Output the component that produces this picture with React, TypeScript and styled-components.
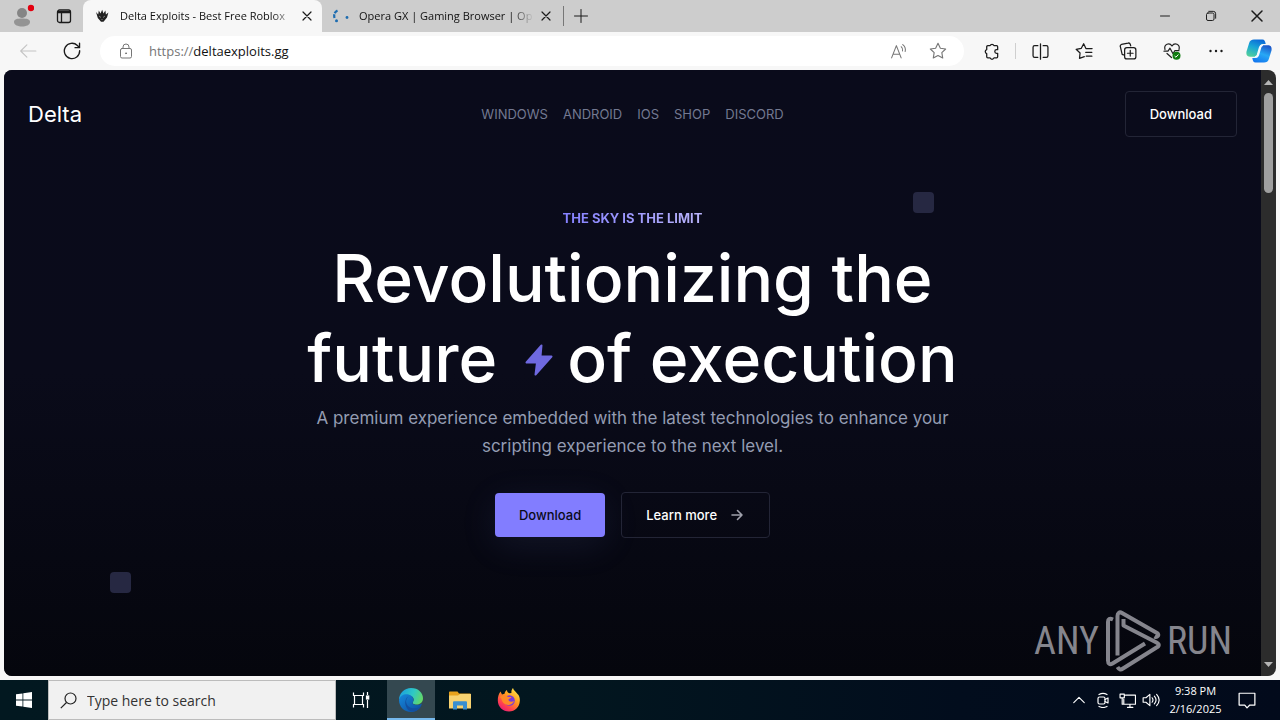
import React from "react";
import styled, { createGlobalStyle } from "styled-components";

const SYSTEM = '"Open Sans", "Noto Sans", sans-serif';
const BRAND = 'Inter, "Liberation Sans", sans-serif';

const GlobalStyle = createGlobalStyle`
  *, *::before, *::after { box-sizing: border-box; }
  body { margin: 0; background: #f7f7f7; font-family: ${SYSTEM}; }
  button, input { font: inherit; color: inherit; }
  button { margin: 0; padding: 0; border: 0; background: none; cursor: pointer; }
  a { color: inherit; text-decoration: none; }
  h1, p { margin: 0; }
  svg { display: block; flex: none; }
`;

const Desktop = styled.div`
  display: flex;
  flex-direction: column;
  min-height: 100vh;
`;

/* ---------- browser frame ---------- */

const TabStrip = styled.header`
  display: flex;
  height: 32px;
  background: #cdcdcd;
`;

const IconButton = styled.button<{ $width?: number; $color?: string }>`
  display: flex;
  flex: none;
  align-items: center;
  justify-content: center;
  width: ${(p) => p.$width ?? 44}px;
  color: ${(p) => p.$color ?? "#1b1b1b"};
`;

const Tab = styled.div<{ $active?: boolean }>`
  display: flex;
  align-items: center;
  width: 239px;
  padding: 0 5px 0 11px;
  background: ${(p) => (p.$active ? "#f7f7f7" : "transparent")};
  border-radius: 8px 8px 0 0;
`;

const TabTitle = styled.span`
  flex: 1;
  min-width: 0;
  margin: 0 4px 0 10px;
  white-space: nowrap;
  font-size: 11px;
  line-height: 16px;
  color: #111;
  mask-image: linear-gradient(90deg, #000 88%, transparent 101%);
`;

const Divider = styled.span<{ $height: number }>`
  flex: none;
  align-self: center;
  width: 1px;
  height: ${(p) => p.$height}px;
  margin: 0 2px;
  background: ${(p) => (p.$height > 18 ? "#777" : "#cfcfcf")};
`;

const WindowControls = styled.div`
  display: flex;
  margin-left: auto;
`;

const Toolbar = styled.div`
  display: flex;
  align-items: stretch;
  height: 38px;
  padding: 4px 0 4px 6px;
  background: #f7f7f7;
`;

const AddressBar = styled.label`
  display: flex;
  flex: 1;
  align-items: center;
  margin: 0 5px 0 6px;
  padding: 0 6px 0 18px;
  border-radius: 15px;
  background: #fff;
  font-size: 13px;
  color: #767676;
`;

const Scheme = styled.span`
  margin-left: 15px;
`;

const AddressInput = styled.input`
  flex: 1;
  min-width: 0;
  padding: 0;
  border: 0;
  outline: 0;
  background: transparent;
  color: #111;
`;

const Viewport = styled.div`
  display: flex;
  flex: 1;
  margin: 0 4px 4px;
  overflow: hidden;
  border-radius: 8px;
  background: #2c2c2c;
`;

const ScrollTrack = styled.div`
  display: flex;
  flex: none;
  flex-direction: column;
  align-items: center;
  width: 15px;
  padding: 10px 0 9px;
`;

const ScrollThumb = styled.div`
  width: 9px;
  height: 100px;
  margin: 8px 0 auto;
  border-radius: 5px;
  background: #9f9f9f;
`;

/* ---------- web page ---------- */

const Page = styled.div`
  position: relative;
  flex: 1;
  font-family: ${BRAND};
  background: linear-gradient(#0a0b1b 0%, #0a0b1a 50%, #05060d 100%);
  color: #fff;
`;

const NavBar = styled.nav`
  display: grid;
  grid-template-columns: 1fr auto 1fr;
  align-items: center;
  padding: 21px 24px;
`;

const Brand = styled.a`
  font-size: 22px;
  line-height: 28px;
`;

const NavLinks = styled.div`
  display: flex;
  gap: 15px;
  font-size: 13px;
  line-height: 20px;
  color: #737991;
`;

const ActionButton = styled.button<{ $primary?: boolean }>`
  display: inline-flex;
  align-items: center;
  justify-self: end;
  gap: 12px;
  height: ${(p) => (p.$primary ? 44 : 46)}px;
  padding: 0 24px;
  border: ${(p) => (p.$primary ? "0" : "1px solid #232536")};
  border-radius: 4px;
  font-size: 13px;
  font-weight: 500;
  line-height: 20px;
  color: ${(p) => (p.$primary ? "#0a0b1a" : "#fff")};
  background: ${(p) => (p.$primary ? "#827dff" : "transparent")};
  box-shadow: ${(p) => (p.$primary ? "0 8px 36px rgba(110, 125, 200, 0.12)" : "none")};
`;

const Hero = styled.main`
  display: flex;
  flex-direction: column;
  align-items: center;
  padding: 50px 24px 0;
  text-align: center;
`;

const Eyebrow = styled.p`
  margin-bottom: 10px;
  font-size: 13px;
  font-weight: 700;
  line-height: 20px;
  color: transparent;
  background: linear-gradient(90deg, #8480ff, #b9b4fb);
  background-clip: text;
`;

const Headline = styled.h1`
  font-size: 66px;
  font-weight: 500;
  line-height: 80px;
`;

const BoltIcon = styled.svg`
  display: inline-block;
  margin: 0 14px 0 28px;
  vertical-align: 6px;
`;

const Lead = styled.p`
  max-width: 660px;
  margin-top: 6px;
  font-size: 17px;
  font-weight: 400;
  line-height: 28px;
  color: #949cb2;
`;

const Actions = styled.div`
  display: flex;
  align-items: center;
  gap: 16px;
  margin-top: 32px;
`;

const FloatingSquare = styled.span<{ $spot: "upper" | "lower" }>`
  position: absolute;
  ${(p) =>
    p.$spot === "upper"
      ? "top: 122px; left: calc(50% + 280px);"
      : "bottom: 83px; left: 106px;"}
  width: 21px;
  height: 21px;
  border-radius: 4px;
  background: #262842;
`;

const Watermark = styled.div`
  position: absolute;
  right: 29px;
  bottom: 4px;
  display: flex;
  align-items: center;
  gap: 6px;
  font-family: "Liberation Sans Narrow", "Roboto Condensed", "Liberation Sans", sans-serif;
  font-size: 38px;
  line-height: 62px;
  color: #85858d;
`;

/* ---------- taskbar ---------- */

const Taskbar = styled.footer`
  display: flex;
  height: 40px;
  background: linear-gradient(90deg, #021820 0%, #02161f 45%, #020d1d 75%, #020a1b 100%);
  color: #fff;
`;

const SearchBox = styled.label`
  display: flex;
  align-items: center;
  width: 288px;
  padding: 0 11px;
  gap: 10px;
  border: 1px solid #bcbcbc;
  background: #f1f1f1;
  color: #222;
  font-size: 14px;
`;

const SearchInput = styled.input`
  flex: 1;
  min-width: 0;
  padding: 0;
  border: 0;
  outline: 0;
  background: transparent;
  &::placeholder { color: #333; opacity: 1; }
`;

const TaskButtons = styled.div`
  display: flex;
  gap: 1px;
`;

const TaskButton = styled.button<{ $active?: boolean; $width?: number }>`
  display: flex;
  flex: none;
  align-items: center;
  justify-content: center;
  width: ${(p) => p.$width ?? 48}px;
  background: ${(p) => (p.$active ? "#344850" : "transparent")};
  box-shadow: ${(p) => (p.$active ? "inset 0 -2px #76b9ed" : "none")};
`;

const Tray = styled.div`
  display: flex;
  align-items: stretch;
  margin-left: auto;
`;

const Clock = styled.button`
  width: 65px;
  text-align: center;
  font-size: 11px;
  line-height: 18px;
`;

/* ---------- icons ---------- */

type LineProps = {
  size?: number;
  width?: number;
  children: React.ReactNode;
};

const Line = ({ size = 16, width = 1, children }: LineProps) => (
  <svg
    width={size}
    height={size}
    viewBox="0 0 16 16"
    fill="none"
    stroke="currentColor"
    strokeWidth={width}
    strokeLinecap="round"
    strokeLinejoin="round"
    aria-hidden="true"
  >
    {children}
  </svg>
);

const CloseIcon = ({ size = 16 }: { size?: number }) => (
  <Line size={size} width={1.2}>
    <path d="M4 4l8 8M12 4l-8 8" />
  </Line>
);

const ProfileIcon = () => (
  <svg width="24" height="24" viewBox="0 0 24 24" aria-hidden="true">
    <circle cx="12" cy="9" r="5" fill="#858585" />
    <path d="M4 18c0-3 3-3.600 8-3.600s8 .6 8 3.600c0 3-4 4.500-8 4.500S4 21 4 18z" fill="#949494" />
    <circle cx="21" cy="4" r="3.200" fill="#e3000f" />
  </svg>
);

const WorkspaceIcon = () => (
  <Line width={1.3}>
    <rect x="1.500" y="2" width="13" height="12.500" rx="2" />
    <path d="M2 3.600h12M2 4.600h12M5.500 5v9" />
  </Line>
);

const DeltaFavicon = () => (
  <svg width="16" height="14" viewBox="-1 0 16 14" aria-hidden="true">
    <path d="M1 3l2.200 2.500L3.800 1.500 5.500 4.500 7.200.8l1.200 3.700L10.400 1.500l.5 4L13.400 3.500 12 8.500 8.500 12.800H6L2.800 9z" fill="#222" />
    <path d="M4 7l2 1.500M10 7L8 8.500M6.500 10.500h1" stroke="#999" strokeWidth=".8" />
  </svg>
);

const LoadingIcon = () => (
  <svg width="16" height="16" viewBox="1 0 16 16" aria-hidden="true">
    <path d="M5.500 2.500C2.500 4 1.700 6.500 2.500 10" fill="none" stroke="#1d6cb0" strokeWidth="2.200" strokeDasharray="4 1.200" />
    <circle cx="4.500" cy="12.800" r="1.500" fill="#1d6cb0" />
    <circle cx="15" cy="9.500" r="1.400" fill="#1d6cb0" />
  </svg>
);

const RestoreIcon = () => (
  <Line size={12} width={1.300}>
    <rect x="2" y="4" width="10" height="10" rx="2" />
    <path d="M5 1.800h6a3.200 3.200 0 0 1 3.200 3.200v6" />
  </Line>
);

const BackIcon = () => (
  <Line size={18} width={1}>
    <path d="M15 8H1.500M7 2.500L1.500 8 7 13.500" />
  </Line>
);

const ReloadIcon = () => (
  <Line size={18} width={1.200}>
    <path d="M14.800 7.800A6.800 6.800 0 1 1 12.800 3.100L14.600 5M14.700 1v4h-4" />
  </Line>
);

const LockIcon = () => (
  <Line size={16} width={1}>
    <rect x="2.500" y="5.500" width="11" height="9.500" rx="1.500" />
    <path d="M5 5.500V4a3 3 0 0 1 6 0v1.500" />
    <circle cx="8" cy="10.300" r=".5" fill="currentColor" />
  </Line>
);

const ReadAloudIcon = () => (
  <Line size={17} width={1}>
    <path d="M1.500 14L6 2.500 10.500 14M3 10.500h6M10.500 3.500a4 4 0 0 1 1.300 4M12 1.500a6.500 6.500 0 0 1 2.300 6.500" />
  </Line>
);

const StarIcon = () => (
  <Line size={18} width={1}>
    <path d="M8 1.200l2.100 4.300 4.700.7-3.400 3.300.8 4.700L8 12l-4.200 2.200.8-4.700L1.200 6.200l4.700-.7z" />
  </Line>
);

/* Jigsaw piece with its tabs on the top, left and bottom and a notch on the right. */
const PuzzleIcon = () => (
  <Line size={17} width={1.200}>
    <path d="M4.500 2.500h2.200a1.900 1.900 0 0 1 3.600 0h2.500a1 1 0 0 1 1 1v2.800h-1a1.700 1.700 0 0 0 0 3.400h1v3.300a1 1 0 0 1-1 1h-2.500a1.900 1.900 0 0 1-3.600 0H4.500a1 1 0 0 1-1-1V10a2 2 0 0 1 0-3.800V3.500a1 1 0 0 1 1-1z" />
  </Line>
);

const SplitIcon = () => (
  <Line size={17} width={1.200}>
    <path d="M5.500 2.500h-3a1.500 1.500 0 0 0-1.500 1.500v8a1.500 1.500 0 0 0 1.500 1.500h3M10.500 2.500h3A1.500 1.500 0 0 1 15 4v8a1.500 1.500 0 0 1-1.500 1.500h-3M8 .8v14.400" />
  </Line>
);

const FavoritesIcon = () => (
  <Line size={18} width={1.100}>
    <path d="M8.300 13L4 14.500l.5-4.700L1 6.500l4.500-.8L7.700 1.500l2 4.300h5.500M9.500 9.200h5.500M10 12.600h5" />
  </Line>
);

const CollectionsIcon = () => (
  <Line size={18} width={1.100}>
    <rect x="5" y="5" width="10" height="10" rx="2" />
    <path d="M10 7.500v5M7.500 10h5M4 11.500L2.800 11 1.200 4.200a1.600 1.600 0 0 1 1-2L8 1a1.600 1.600 0 0 1 2 1l.4 1.500" />
  </Line>
);

const EssentialsIcon = () => (
  <svg width="18" height="18" viewBox="0 0 18 18" aria-hidden="true">
    <path d="M2 7.500C.5 2 6.500.2 9 4c2.500-3.800 8.500-2 7 3.500M1 9.200h4l2-3 3 5.500 1.800-3H16M4 11.500l4.500 4" fill="none" stroke="#222" strokeWidth="1.200" strokeLinejoin="round" strokeLinecap="round" />
    <circle cx="13.500" cy="13.800" r="4" fill="#107c10" />
    <path d="M11.600 14l1.300 1.200 2.500-2.700" fill="none" stroke="#fff" />
  </svg>
);

const CopilotIcon = () => (
  <svg width="26" height="24" viewBox="0 0 26 24" aria-hidden="true">
    <defs>
      <linearGradient id="copilotLeft" x1="0.600" y1="0" x2="0.200" y2="1">
        <stop offset="0" stopColor="#0b6bd8" />
        <stop offset=".45" stopColor="#18a6d6" />
        <stop offset="1" stopColor="#53d09a" />
      </linearGradient>
      <linearGradient id="copilotRight" x1="0.700" y1="0" x2="0.300" y2="1">
        <stop offset="0" stopColor="#1b55c8" />
        <stop offset=".5" stopColor="#28a8f5" />
        <stop offset="1" stopColor="#1478ef" />
      </linearGradient>
    </defs>
    <path d="M8 .5h8.500c2 0 2.600 1.500 3.200 4.500H17c-2 0-2.800 1-3.300 3L11.500 15.500c-.5 1.600-1.500 2.200-3 2.200H4C1 17.700 0 15.500.5 12.500l2.500-8C3.800 1.500 5.500.5 8 .5z" fill="url(#copilotLeft)" />
    <path d="M18 23.500H9.500c-2 0-2.600-1.500-3.200-4.500H9c2 0 2.800-1 3.300-3L14.500 8.500c.5-1.600 1.500-2.200 3-2.200H22c3 0 4 2.200 3.500 5.200l-2.500 8C22.200 22.500 20.500 23.500 18 23.500z" fill="url(#copilotRight)" />
    <path d="M13.700 8.500c.4-1.400 1-2.300 2.300-2.300h.8c-1.200.3-1.900 1.100-2.300 2.300L12.300 16c-.4 1.300-1 2-2.300 2h-.8c1.200-.3 1.900-1 2.300-2z" fill="#f4faff" stroke="#f4faff" strokeWidth="1.600" />
  </svg>
);

const AnyRunMark = () => (
  <svg width="56" height="62" viewBox="0 0 56 62" fill="none" stroke="#85858d" strokeWidth="4" strokeLinejoin="round" aria-hidden="true">
    <path d="M8 9.500C4.500 8 3 9 3 12v38.500c0 3.500 2 4.500 4.500 3L40 33.500" />
    <path d="M12.500 45.500V6c0-3 2-4.500 4.500-3L52 23c3 2 0 5-2.500 3.500" />
    <path d="M18.500 9v6.500l33 17c3 1.500 3 3.500 0 5L18 58.500c-2.500 1.600-4 1-5.500-1.500" />
  </svg>
);

const StartIcon = () => (
  <svg width="16" height="16" viewBox="0 0 16 16" fill="#fff" aria-hidden="true">
    <path d="M0 2.300L6.500 1.400V7.600H0zM7.300 1.300L16 0v7.600H7.300zM0 8.400h6.500v6.200L0 13.700zM7.300 8.400H16V16l-8.700-1.300z" />
  </svg>
);

const TaskViewIcon = () => (
  <svg width="18" height="18" viewBox="0 0 18 18" fill="none" stroke="#fff" strokeWidth="1.200" aria-hidden="true">
    <path d="M1.500 1.500v3h10v-3M1.500 16.500v-3h10v3M2.500 4.500v9M10.500 4.500v9M15.500 1v3M15.500 9v8" />
    <rect x="14.500" y="5" width="2.200" height="3" fill="#fff" />
  </svg>
);

const EdgeIcon = () => (
  <svg width="24" height="24" viewBox="0 0 24 24" aria-hidden="true">
    <defs>
      <linearGradient id="edgeTop" x1="0" y1="0.300" x2="1" y2="0.600">
        <stop offset="0" stopColor="#1a9fe0" />
        <stop offset=".55" stopColor="#2fc9c4" />
        <stop offset="1" stopColor="#65d865" />
      </linearGradient>
      <linearGradient id="edgeBase" x1="0" y1="0" x2="1" y2="1">
        <stop offset="0" stopColor="#1689dc" />
        <stop offset="1" stopColor="#0d4a9c" />
      </linearGradient>
    </defs>
    <path d="M0 12C0 5 5.500 0 12 0c7.500 0 12 5 12 10.200 0 4-3 6.300-6.500 6.300-3 0-4.500-1.200-3.500-2.500 1.700-2.300.6-6-3.500-6C6 8 1 9.500 0 12z" fill="url(#edgeTop)" />
    <path d="M0 12c1-4.500 5.500-6.500 9.500-5.500 3 .8 5 3 5 5.500 0 1-.4 1.700-.8 2.300-.8 1.300.8 2.500 3.600 2.700 2 .1 3.700-.3 5-1.200.5-.3.700 0 .4.600C20.800 21 17 24 12 24 5 24 0 18.500 0 12z" fill="url(#edgeBase)" />
    <path d="M9.500 8.500c-2.500 2-3.600 6-.5 9.500 3 3 8 3 12 .7.500-.3.700-.2.300.5-1.500 2.300-3.800 3.700-6.800 4.300C8.500 24 5 17 6.700 12c.5-1.600 1.500-2.900 2.800-3.500z" fill="#134f9f" />
  </svg>
);

const FolderIcon = () => (
  <svg width="22" height="19" viewBox="0 0 22 19" aria-hidden="true">
    <path d="M0 1.500C0 .7.500.5 1 .5h7.500L10 2.500h11.500V17H0z" fill="#e8a21c" />
    <path d="M0 4.500h9L11 3h11v14.500H0z" fill="#f8d270" />
    <path d="M4 18.500v-7c0-.8.500-1.300 1.300-1.300h11.400c.8 0 1.300.5 1.300 1.300v7h-4v-4H8v4z" fill="#3a8fd0" />
  </svg>
);

const FirefoxIcon = () => (
  <svg width="24" height="24" viewBox="0 0 24 24" aria-hidden="true">
    <defs>
      <linearGradient id="foxBody" x1="0.850" y1="0.050" x2="0.200" y2="1">
        <stop offset="0" stopColor="#ffe54a" />
        <stop offset=".4" stopColor="#ff9a1f" />
        <stop offset=".75" stopColor="#ff3f50" />
        <stop offset="1" stopColor="#e3197a" />
      </linearGradient>
    </defs>
    <path d="M3.500 3.500l1.500 3 2.500-.8C8 3.500 9 2.500 10 2c0 1.500.5 2.600 2.500 3.300L14.500 5c-.5-2 .5-4 1.500-5 .5 2.500 3 3.800 4.500 6l1 1c1.200 2 1.500 4 1.300 6C22.500 19 18 23.500 12 23.500S.8 19 .8 12.500C.8 9 1.500 6 3.500 3.500z" fill="url(#foxBody)" />
    <circle cx="12.500" cy="12.500" r="5.300" fill="#7a3bd8" />
    <path d="M3 9c3-2.500 6-2 8 0h3.500c-.5 1.600-3 1.700-3 2.700 0 1.800 3 2.800 5.500 1.200-1.300 4-7 5.600-10.500 2.100C4.500 13 5 10.500 3 9z" fill="#ff8a27" />
  </svg>
);

const MeetNowIcon = () => (
  <Line size={16} width={1.200}>
    <rect x="3" y="5" width="7" height="7" rx="1.500" />
    <path d="M10 7.500l3-1.500v5l-3-1.500M4 2.500Q8 .2 12 2.500M4 14.500Q8 16.500 12 14.500" />
  </Line>
);

const NetworkIcon = () => (
  <Line size={17} width={1.100}>
    <path d="M6 3h9.500v8.500H4.500V7M8 14.500h5M10.300 11.500v3M1 2h4v3.500H1zM3 5.500v6h1.500" />
  </Line>
);

const VolumeIcon = () => (
  <Line size={18} width={1}>
    <path d="M1 6h2.500L7 3v10l-3.500-3H1zM9 6q1.500 2 0 4M11 4.500q3 3.500 0 7M13 3q4.500 5 0 10" />
  </Line>
);

const ActionCenterIcon = () => (
  <Line size={18} width={1.100}>
    <path d="M1 2h14v10.500h-4.500L8 15l-2-2.500H1z" />
  </Line>
);

const links = ["Windows", "Android", "iOS", "Shop", "Discord"];

export default function App() {
  return (
    <Desktop>
      <GlobalStyle />
      <TabStrip>
        <IconButton aria-label="Profile"><ProfileIcon /></IconButton>
        <IconButton $width={39} aria-label="Workspaces"><WorkspaceIcon /></IconButton>
        <Tab $active>
          <DeltaFavicon />
          <TabTitle>Delta Exploits - Best Free Roblox</TabTitle>
          <IconButton $width={20} aria-label="Close tab"><CloseIcon /></IconButton>
        </Tab>
        <Tab>
          <LoadingIcon />
          <TabTitle>Opera GX | Gaming Browser | Op</TabTitle>
          <IconButton $width={20} aria-label="Close tab"><CloseIcon /></IconButton>
        </Tab>
        <Divider $height={20} />
        <IconButton $width={30} aria-label="New tab">
          <Line><path d="M8 1.500v13M1.500 8h13" /></Line>
        </IconButton>
        <WindowControls>
          <IconButton $width={46} aria-label="Minimize">
            <Line size={12} width={1.300}><path d="M2 8h12" /></Line>
          </IconButton>
          <IconButton $width={46} aria-label="Restore"><RestoreIcon /></IconButton>
          <IconButton $width={46} aria-label="Close"><CloseIcon size={20} /></IconButton>
        </WindowControls>
      </TabStrip>

      <Toolbar>
        <IconButton $color="#c4c4c4" aria-label="Back"><BackIcon /></IconButton>
        <IconButton aria-label="Refresh"><ReloadIcon /></IconButton>
        <AddressBar>
          <LockIcon />
          <Scheme>https://</Scheme>
          <AddressInput aria-label="Address" defaultValue="deltaexploits.gg" />
          <IconButton $width={40} $color="#767676" aria-label="Read aloud"><ReadAloudIcon /></IconButton>
          <IconButton $width={40} $color="#767676" aria-label="Add to favorites"><StarIcon /></IconButton>
        </AddressBar>
        <IconButton aria-label="Extensions"><PuzzleIcon /></IconButton>
        <Divider $height={16} />
        <IconButton aria-label="Split screen"><SplitIcon /></IconButton>
        <IconButton aria-label="Favorites"><FavoritesIcon /></IconButton>
        <IconButton aria-label="Collections"><CollectionsIcon /></IconButton>
        <IconButton aria-label="Browser essentials"><EssentialsIcon /></IconButton>
        <IconButton aria-label="More">
          <Line>
            <g fill="currentColor" stroke="none">
              <circle cx="2.500" cy="8" r="1.200" />
              <circle cx="8" cy="8" r="1.200" />
              <circle cx="13.500" cy="8" r="1.200" />
            </g>
          </Line>
        </IconButton>
        <IconButton $width={42} aria-label="Copilot"><CopilotIcon /></IconButton>
      </Toolbar>

      <Viewport>
        <Page>
          <NavBar>
            <Brand href="#home">Delta</Brand>
            <NavLinks>
              {links.map((label) => (
                <a key={label} href={`#${label.toLowerCase()}`}>{label.toUpperCase()}</a>
              ))}
            </NavLinks>
            <ActionButton>Download</ActionButton>
          </NavBar>
          <Hero>
            <Eyebrow>THE SKY IS THE LIMIT</Eyebrow>
            <Headline>
              Revolutionizing the
              <br />
              future
              <BoltIcon width="28" height="32" viewBox="0 0 28 32" aria-hidden="true">
                <path
                  d="M16.500 1.500L1.500 18.500H12L10.500 30.500L26.500 12.500H15.500z"
                  fill="#6f69e0"
                  stroke="#6f69e0"
                  strokeWidth="2"
                  strokeLinejoin="round"
                />
              </BoltIcon>
              of execution
            </Headline>
            <Lead>
              A premium experience embedded with the latest technologies to enhance your
              scripting experience to the next level.
            </Lead>
            <Actions>
              <ActionButton $primary>Download</ActionButton>
              <ActionButton>
                Learn more
                <svg width="16" height="16" viewBox="0 0 16 16" fill="none" stroke="#a0a1ac" strokeWidth="1.600" strokeLinecap="round" strokeLinejoin="round" aria-hidden="true">
                  <path d="M3 8h10M8.500 3.500L13 8l-4.500 4.500" />
                </svg>
              </ActionButton>
            </Actions>
          </Hero>
          <FloatingSquare $spot="upper" />
          <FloatingSquare $spot="lower" />
          <Watermark>
            <span>ANY</span>
            <AnyRunMark />
            <span>RUN</span>
          </Watermark>
        </Page>
        <ScrollTrack>
          <svg width="9" height="5" viewBox="0 0 9 5" fill="#b5b5b5" aria-hidden="true"><path d="M0 5L4.500 0 9 5z" /></svg>
          <ScrollThumb />
          <svg width="9" height="5" viewBox="0 0 9 5" fill="#b5b5b5" aria-hidden="true"><path d="M0 0h9L4.500 5z" /></svg>
        </ScrollTrack>
      </Viewport>

      <Taskbar>
        <IconButton $width={48} aria-label="Start"><StartIcon /></IconButton>
        <SearchBox>
          <svg width="17" height="17" viewBox="0 0 17 17" fill="none" stroke="#222" strokeWidth="1.200" aria-hidden="true">
            <circle cx="10.500" cy="6.500" r="5.500" />
            <path d="M6.500 10.500L.8 16.200" />
          </svg>
          <SearchInput aria-label="Search" placeholder="Type here to search" />
        </SearchBox>
        <TaskButtons>
          <TaskButton $width={50} aria-label="Task view"><TaskViewIcon /></TaskButton>
          <TaskButton $active aria-label="Microsoft Edge"><EdgeIcon /></TaskButton>
          <TaskButton aria-label="File Explorer"><FolderIcon /></TaskButton>
          <TaskButton aria-label="Firefox"><FirefoxIcon /></TaskButton>
        </TaskButtons>
        <Tray>
          <IconButton $width={24} $color="#fff" aria-label="Show hidden icons">
            <Line size={14} width={1.300}><path d="M2 11l6-6 6 6" /></Line>
          </IconButton>
          <IconButton $width={24} $color="#fff" aria-label="Meet now"><MeetNowIcon /></IconButton>
          <IconButton $width={24} $color="#fff" aria-label="Network"><NetworkIcon /></IconButton>
          <IconButton $width={24} $color="#fff" aria-label="Volume"><VolumeIcon /></IconButton>
          <Clock>9:38 PM<br />2/16/2025</Clock>
          <IconButton $width={38} $color="#fff" aria-label="Notifications"><ActionCenterIcon /></IconButton>
          <IconButton $width={14} aria-label="Show desktop" />
        </Tray>
      </Taskbar>
    </Desktop>
  );
}
